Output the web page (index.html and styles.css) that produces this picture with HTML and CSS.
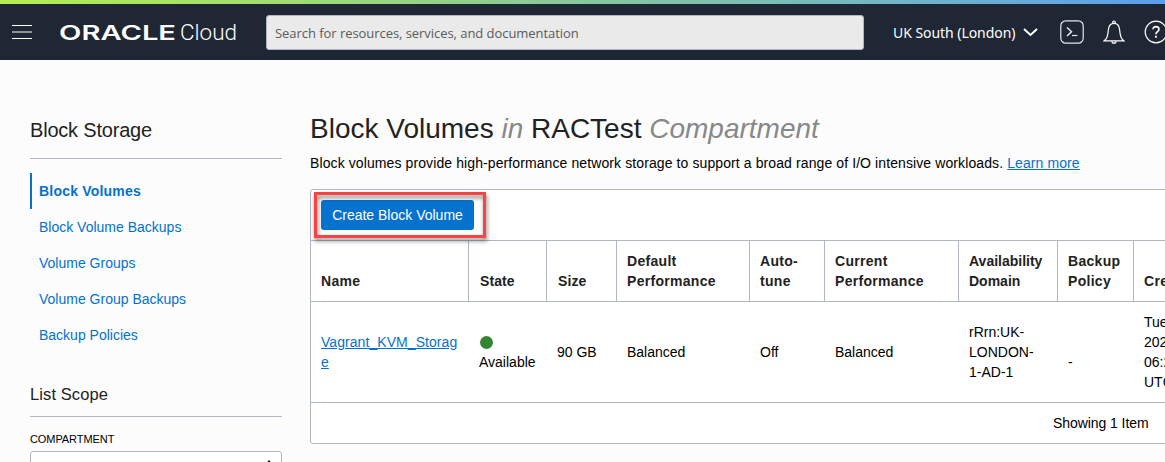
FILE: index.html
```html
<!DOCTYPE html>
<html lang="en">
<head>
<meta charset="utf-8">
<title>Block Volumes</title>
<link rel="stylesheet" href="styles.css">
</head>
<body>
<div class="accent"></div>
<header class="topbar">
  <svg class="menu" width="20" height="15" viewBox="0 0 20 15"><path d="M0 .5h20M0 13.5h20" stroke="#fff"/><path d="M0 7h20" stroke="#8e9399" stroke-width="2"/></svg>
  <svg class="brand" width="180" height="26" viewBox="0 0 180 26">
    <text class="brand-name" x="-1" y="21" textLength="117" lengthAdjust="spacingAndGlyphs">ORACLE</text>
    <text class="brand-cloud" x="120" y="21" textLength="57" lengthAdjust="spacingAndGlyphs">Cloud</text>
  </svg>
  <div class="search"><span>Search for resources, services, and documentation</span></div>
  <div class="region"><span>UK South (London)</span>
    <svg width="15" height="10" viewBox="0 0 15 10"><path d="M1 2l6.500 6L14 2" fill="none" stroke="#fff" stroke-width="2"/></svg>
  </div>
  <svg class="tool shell" width="24" height="24" viewBox="0 0 24 24" fill="none" stroke="#e8e9eb" stroke-width="1.2"><rect x=".8" y=".8" width="22.4" height="22.4" rx="5"/><path d="M7 7.500l4.500 4.300L7 16" stroke-width="1.500"/><path d="M12 15.500h5.300"/></svg>
  <svg class="tool bell" width="22" height="24" viewBox="0 0 22 24" fill="none" stroke="#fff" stroke-width="1.2"><path d="M1.300 20.800c2.200-1.800 3.200-3.800 3.600-7.300l.6-4.500C6 5.300 8 3.300 11 3.300S16 5.300 16.500 9l.6 4.500c.4 3.500 1.400 5.500 3.600 7.300z"/><circle cx="11" cy="2.300" r="1.300"/><path d="M9 21.200a2 2 0 004 0"/></svg>
  <svg class="tool help" width="24" height="24" viewBox="0 0 24 24" fill="none" stroke="#fff" stroke-width="1.200"><circle cx="12" cy="12" r="10.800"/><path d="M8.900 9.300C8.900 7.500 10.200 6.600 11.900 6.600s3.100 1 3.100 2.700c0 2.300-3.100 2.500-3.100 5" stroke-width="1.600"/><path d="M11.900 15.800v2" stroke-width="1.800"/></svg>
</header>
<div class="page">
  <aside class="side">
    <h2 class="side-title">Block Storage</h2>
    <nav class="nav">
      <a class="active">Block Volumes</a>
      <a>Block Volume Backups</a>
      <a>Volume Groups</a>
      <a>Volume Group Backups</a>
      <a>Backup Policies</a>
    </nav>
    <h3 class="scope-title">List Scope</h3>
    <label class="label">COMPARTMENT</label>
    <div class="select"><svg width="8" height="5" viewBox="0 0 8 5"><path d="M4 0l4 5H0z"/></svg></div>
  </aside>
  <main class="main">
    <h1 class="title">Block Volumes <i>in</i> RACTest <i>Compartment</i></h1>
    <p class="intro">Block volumes provide high-performance network storage to support a broad range of I/O intensive workloads. <a class="link">Learn more</a></p>
    <section class="panel">
      <div class="actions"><div class="create">Create Block Volume<span class="highlight"></span></div></div>
      <div class="grid head">
        <div>Name</div><div class="nudge">State</div><div class="nudge">Size</div><div>Default<br>Performance</div><div>Auto-<br>tune</div><div>Current<br>Performance</div><div class="tight">Availability<br>Domain</div><div>Backup<br>Policy</div><div>Created</div>
      </div>
      <div class="grid row">
        <div><a class="link name">Vagrant_KVM_Storag<br>e</a></div>
        <div class="state"><span class="dot"></span><span>Available</span></div>
        <div>90 GB</div><div>Balanced</div><div>Off</div><div>Balanced</div>
        <div>rRrn:UK-<br>LONDON-<br>1-AD-1</div>
        <div class="policy">-</div>
        <div>Tue,<br>2021<br>06:24<br>UTC</div>
      </div>
      <footer class="foot">Showing 1 Item</footer>
    </section>
  </main>
</div>
</body>
</html>
```

FILE: styles.css
```css
* { box-sizing: border-box; }
body { margin: 0; height: 462px; overflow: hidden; background: #fcfcfc; color: #000; font: 14px/20px "Liberation Sans", Arial, sans-serif; }
.accent { height: 4px; background: linear-gradient(90deg, #b4ed50 0%, #9bdb77 28%, #84c79e 52%, #72b6c5 76%, #5a9fee 100%); }
.topbar { height: 56px; background: #1e2733; display: flex; align-items: center; color: #fff; overflow: hidden; }
.topbar > * { flex: none; }
.menu { margin-left: 12px; }
.brand { margin-left: 28px; }
.brand-name { font: 600 20px Inter, sans-serif; fill: #fff; }
.brand-cloud { font: 300 22px Roboto, sans-serif; fill: #fff; }
.search { margin-left: 26px; width: 598px; height: 35px; background: #eaeaea; border: 1px solid #b1b7c2; border-radius: 3px; padding: 1px 8px 0; display: flex; align-items: center; color: #5a5a5a; font: 13px "Open Sans", "Noto Sans", sans-serif; letter-spacing: -.05px; }
.region { margin-left: 29px; width: 145px; display: flex; align-items: center; justify-content: space-between; font: 14px "Noto Sans", sans-serif; letter-spacing: -.05px; white-space: nowrap; }
.shell { margin-left: 22px; }
.bell { margin-left: 19px; }
.help { margin-left: 19px; }
.page { display: flex; height: 402px; overflow: hidden; padding-left: 30px; }
.side { width: 252px; flex: none; padding-top: 55px; }
.side-title { margin: 0; height: 44px; padding-top: 3px; border-bottom: 1px solid #b1b7c2; font-size: 20px; line-height: 24px; font-weight: 400; letter-spacing: -.2px; color: #222; }
.nav { margin-top: 14px; display: flex; flex-direction: column; color: #0572ce; }
.nav a { height: 36px; line-height: 36px; padding-left: 9px; }
.nav .active { border-left: 2px solid #0572ce; padding-left: 7px; font-weight: 700; letter-spacing: .2px; }
.scope-title { margin: 28px 0 0; height: 36px; padding-top: 1px; border-bottom: 1px solid #b1b7c2; font-size: 16.500px; line-height: 24px; font-weight: 400; letter-spacing: .1px; color: #222; }
.label { display: block; margin-top: 12px; height: 22px; font-size: 11px; line-height: 20px; letter-spacing: -.85px; letter-spacing: -.85px; letter-spacing: -.08px; }
.select { height: 36px; border: 1px solid #b1b7c2; border-radius: 3px; background: #fff; display: flex; justify-content: flex-end; align-items: flex-start; padding: 8px 8px; }
.main { margin-left: 28px; padding-top: 51px; flex: none; width: 900px; }
.title { margin: 0; font-size: 28px; line-height: 36px; font-weight: 400; color: #222; white-space: nowrap; }
.title i { color: #888; }
.intro { margin: 6px 0 16px; white-space: nowrap; letter-spacing: .1px; }
.link { color: #0572ce; text-decoration: underline; }
.name { letter-spacing: .06px; }
.panel { border: 1px solid #b1b7c2; border-radius: 3px; background: #fff; }
.actions { height: 50px; padding: 10px; }
.create { position: relative; width: 153px; height: 30px; border-radius: 3px; background: #0572ce; color: #fff; text-align: center; line-height: 30px; white-space: nowrap; }
.highlight { position: absolute; left: -7px; top: -8px; width: 172px; height: 46px; border: 3px solid #fc4242; filter: drop-shadow(1px 3px 2px rgba(0,0,0,.5)); }
.grid { display: grid; grid-template-columns: 157px 78px 70px 133px 75px 134px 99px 76px 1fr; border-top: 1px solid #b1b7c2; }
.grid > div { padding: 10px 0 10px 10px; border-left: 1px solid #b1b7c2; white-space: nowrap; }
.grid > div:first-child { border-left: 0; }
.head { height: 61px; font-weight: 700; color: #222; letter-spacing: .3px; }
.head > div { display: flex; align-items: flex-end; }
.head .nudge { padding-left: 11px; letter-spacing: .1px; }
.head .tight { letter-spacing: 0; }
.row { height: 101px; align-items: center; }
.grid.row > div { border-left-color: transparent; }
.state { display: flex; flex-direction: column; }
.dot { width: 13px; height: 13px; margin: 4px 0 3px .5px; border-radius: 50%; background: #338533; }
.grid .policy { padding-top: 30px; }
.foot { height: 41px; border-top: 1px solid #b1b7c2; line-height: 40px; padding-left: 742px; letter-spacing: -.07px; }
```
